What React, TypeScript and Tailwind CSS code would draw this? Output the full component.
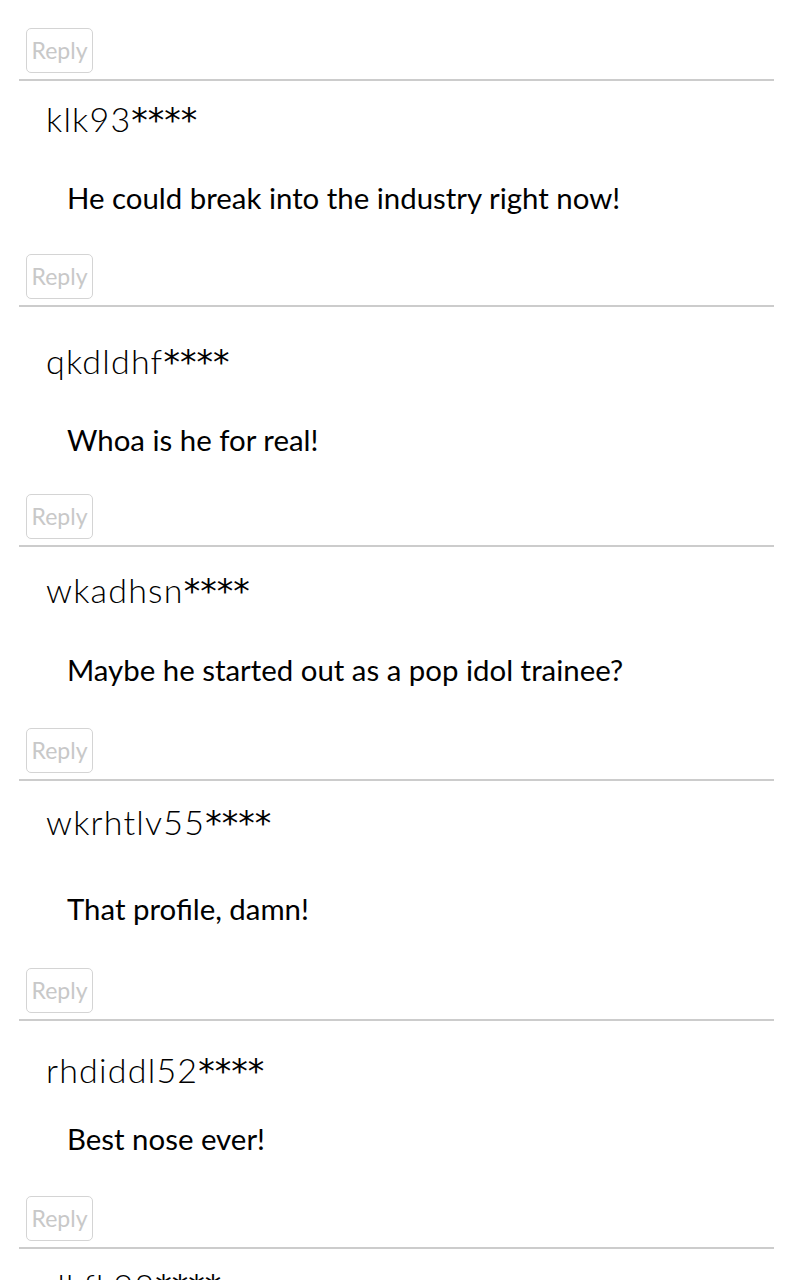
const comments = [
  {
    name: "klk93",
    text: "He could break into the industry right now!",
    nameGap: "mt-[18px]",
    textGap: "mt-[41px]",
    replyGap: "mt-[38px]",
  },
  {
    name: "qkdldhf",
    text: "Whoa is he for real!",
    nameGap: "mt-[34px]",
    textGap: "mt-[41px]",
    replyGap: "mt-[36px]",
  },
  {
    name: "wkadhsn",
    text: "Maybe he started out as a pop idol trainee?",
    nameGap: "mt-[23px]",
    textGap: "mt-[42px]",
    replyGap: "mt-[40px]",
  },
  {
    name: "wkrhtlv55",
    text: "That profile, damn!",
    nameGap: "mt-[21px]",
    textGap: "mt-[49px]",
    replyGap: "mt-[41px]",
  },
  {
    name: "rhdiddl52",
    text: "Best nose ever!",
    nameGap: "mt-[29px]",
    textGap: "mt-[31px]",
    replyGap: "mt-[39px]",
  },
]

function ReplyRow() {
  return (
    <>
      <div className="pl-[7px]">
        <button className="h-[45px] w-[67px] rounded-[5px] border border-[#d4d4d4] text-[23px] leading-none text-[#c8c8c8]">
          Reply
        </button>
      </div>
      <div className="mt-[6px] h-[2px] bg-[#cccccc]" />
    </>
  )
}

function UserName({ name, className }: { name: string; className: string }) {
  return (
    <div
      className={`${className} h-[40px] whitespace-nowrap pl-[27px] text-[34px] font-light leading-[40px] tracking-[1.2px]`}
    >
      {name}
      <span
        className="text-[33px] font-normal leading-none tracking-normal"
        style={{ fontFamily: "'DejaVu Sans', sans-serif" }}
      >
        ****
      </span>
    </div>
  )
}

export default function App() {
  return (
    <div
      className="h-[1280px] overflow-hidden bg-white pl-[19px] pr-[26px] pt-[28px] text-black"
      style={{ fontFamily: "Lato, 'Noto Sans', sans-serif" }}
    >
      <ReplyRow />
      {comments.map((c) => (
        <div key={c.name}>
          <UserName name={c.name} className={c.nameGap} />
          <p className={`${c.textGap} pl-[48px] text-[29.4px] leading-[36px]`}>{c.text}</p>
          <div className={c.replyGap}>
            <ReplyRow />
          </div>
        </div>
      ))}
      <UserName name="dkfk98" className="mt-[17px]" />
    </div>
  )
}
